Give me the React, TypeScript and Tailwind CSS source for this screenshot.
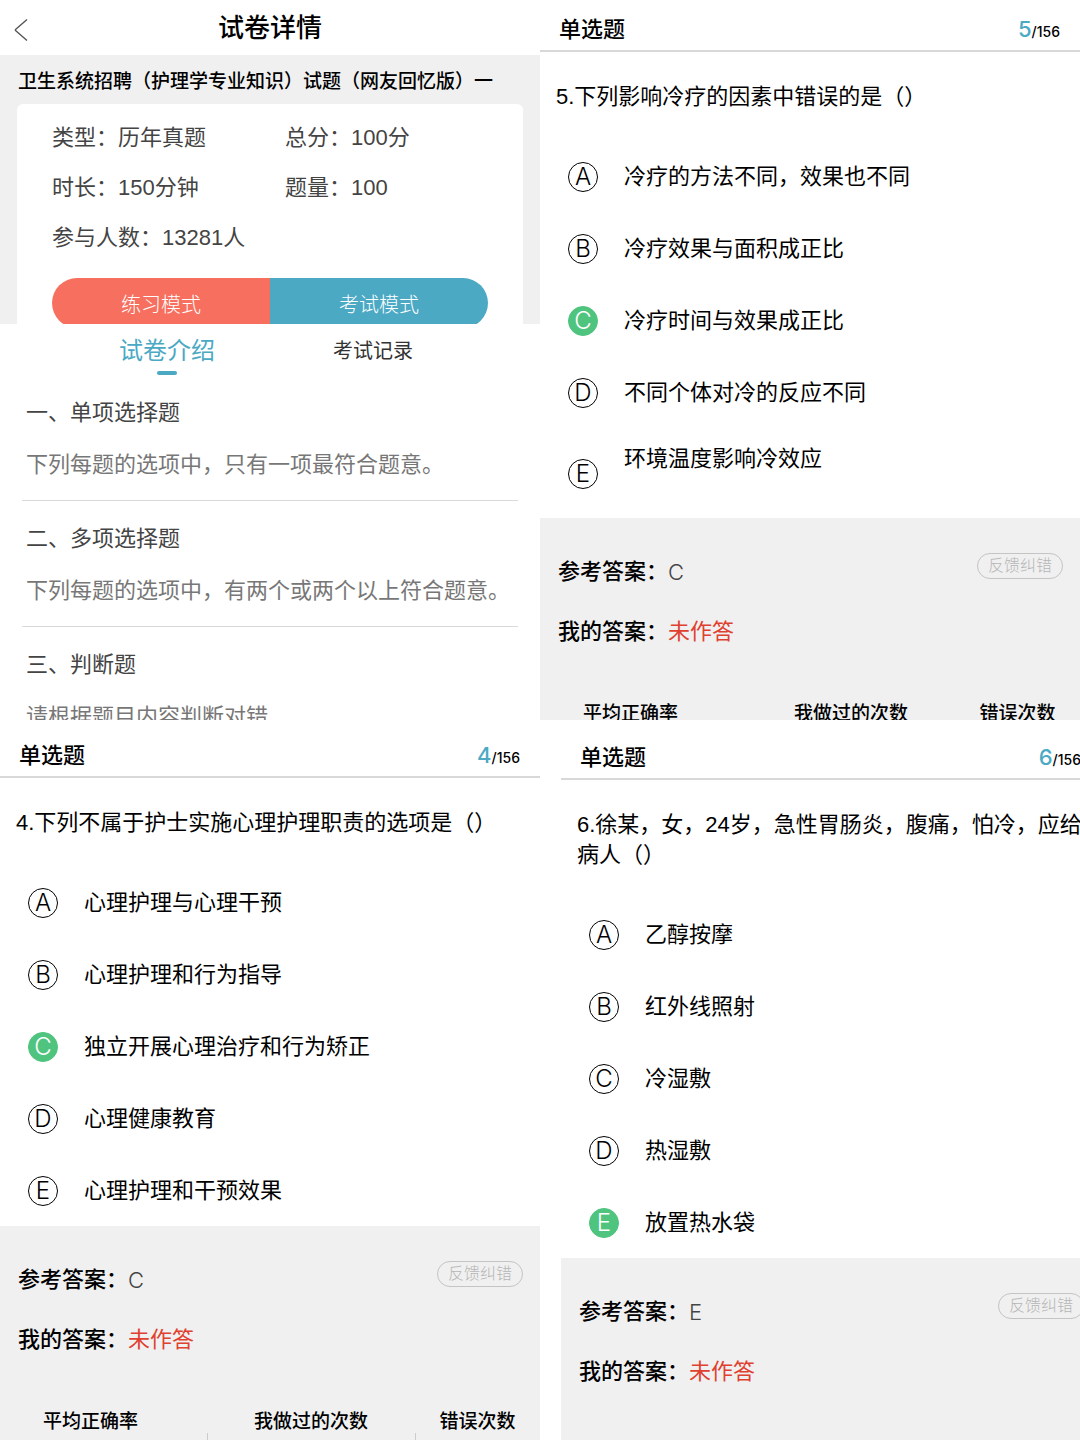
import type { ReactNode } from 'react';

type Option = { key: string; text: string; tall?: boolean };

type Question = {
    no: number;
    title: string;
    options: Option[];
    answer: string;
};

const TOTAL = 156;

const question4: Question = {
    no: 4,
    title: '下列不属于护士实施心理护理职责的选项是（）',
    options: [
        { key: 'A', text: '心理护理与心理干预' },
        { key: 'B', text: '心理护理和行为指导' },
        { key: 'C', text: '独立开展心理治疗和行为矫正' },
        { key: 'D', text: '心理健康教育' },
        { key: 'E', text: '心理护理和干预效果' },
    ],
    answer: 'C',
};

const question5: Question = {
    no: 5,
    title: '下列影响冷疗的因素中错误的是（）',
    options: [
        { key: 'A', text: '冷疗的方法不同，效果也不同' },
        { key: 'B', text: '冷疗效果与面积成正比' },
        { key: 'C', text: '冷疗时间与效果成正比' },
        { key: 'D', text: '不同个体对冷的反应不同' },
        { key: 'E', text: '环境温度影响冷效应', tall: true },
    ],
    answer: 'C',
};

const question6: Question = {
    no: 6,
    title: '徐某，女，24岁，急性胃肠炎，腹痛，怕冷，应给病人（）',
    options: [
        { key: 'A', text: '乙醇按摩' },
        { key: 'B', text: '红外线照射' },
        { key: 'C', text: '冷湿敷' },
        { key: 'D', text: '热湿敷' },
        { key: 'E', text: '放置热水袋' },
    ],
    answer: 'E',
};

const sections = [
    { title: '一、单项选择题', text: '下列每题的选项中，只有一项最符合题意。' },
    { title: '二、多项选择题', text: '下列每题的选项中，有两个或两个以上符合题意。' },
    { title: '三、判断题', text: '请根据题目内容判断对错' },
];

function PaperDetail() {
    return (
        <section className="min-w-0 overflow-hidden">
            <div className="h-[324px] overflow-hidden bg-[#f0f0f0]">
                <header className="grid h-[55px] grid-cols-[40px_1fr_40px] items-center bg-white">
                    <button type="button" aria-label="返回" className="pt-1 pl-3.5">
                        <svg width="14" height="24" viewBox="0 0 14 24" fill="none" stroke="#555" strokeWidth="1.4">
                            <path d="M13 1.5 1.8 11.2q-.9.8 0 1.6L13 22.5" />
                        </svg>
                    </button>
                    <h1 className="text-center text-[26px] leading-[54px] font-medium">试卷详情</h1>
                </header>
                <h2 className="px-[18px] pt-3 text-[19px] leading-[30px] font-medium whitespace-nowrap">
                    卫生系统招聘（护理学专业知识）试题（网友回忆版）一
                </h2>
                <div className="mx-[17px] mt-[7px] rounded-md bg-white px-[35px] pt-[9px] text-[#444]">
                    <dl className="grid grid-cols-[233px_1fr] text-[22px] leading-[50px]">
                        <Info label="类型">历年真题</Info>
                        <Info label="总分">100分</Info>
                        <Info label="时长">150分钟</Info>
                        <Info label="题量">100</Info>
                        <Info label="参与人数">13281人</Info>
                    </dl>
                    <div className="mt-[15px] flex overflow-hidden rounded-full text-[20px] leading-[46px] font-light text-white">
                        <button type="button" className="flex-1 bg-[#f76f5e] pt-1">练习模式</button>
                        <button type="button" className="flex-1 bg-[#4ba9c4] pt-1">考试模式</button>
                    </div>
                </div>
            </div>

            <nav className="flex h-[51px] items-start px-16">
                <button type="button" className="flex flex-1 flex-col items-center pt-3 text-[24px] leading-[30px] text-[#4ba9c4]">
                    试卷介绍
                    <span className="mt-[5px] h-1 w-5 rounded-full bg-[#4ba9c4]" />
                </button>
                <button type="button" className="flex-1 pt-3 text-[20px] leading-[30px] text-[#333]">
                    考试记录
                </button>
            </nav>

            <div className="px-[22px]">
                {sections.map((s) => (
                    <div key={s.title} className="border-b border-[#d9d9d9] px-1 pt-[23px] pb-5 text-[22px] leading-[30px] whitespace-nowrap">
                        <h3 className="text-[#444]">{s.title}</h3>
                        <p className="mt-[22px] text-[#777]">{s.text}</p>
                    </div>
                ))}
            </div>
        </section>
    );
}

function Info({ label, children }: { label: string; children: ReactNode }) {
    return (
        <div className="flex">
            <dt>{label}：</dt>
            <dd>{children}</dd>
        </div>
    );
}

function QuestionPanel({ question }: { question: Question }) {
    const { no, title, options, answer } = question;

    return (
        <article className="flex h-full w-full flex-col">
            <header className="flex h-[52px] shrink-0 items-baseline justify-between border-b-2 border-[#d8d8d8] pt-3.5 pr-5 pl-[19px]">
                <h2 className="text-[22px] leading-[30px] font-medium">单选题</h2>
                <p className="font-['Inter',sans-serif] text-[14px] leading-[30px] font-medium">
                    <span className="text-[22px] text-[#4ba9c4]">{no}</span>
                    {`/${TOTAL}`}
                </p>
            </header>

            <fieldset>
                <legend className="px-4 pt-[30px] pb-7 text-[22px] leading-[30px]">{`${no}.${title}`}</legend>
                {options.map((o) => (
                    <label key={o.key} className="flex min-h-[72px] items-center gap-[26px] pt-4 pb-3.5 pl-7 text-[22px] leading-[30px]">
                        <span className="grid shrink-0 place-items-center">
                            <input
                                type="radio"
                                name={`question-${no}`}
                                defaultChecked={o.key === answer}
                                className="peer col-start-1 row-start-1 size-[30px] appearance-none rounded-full border border-black checked:border-[#4fc47f] checked:bg-[#4fc47f]"
                            />
                            <span className="pointer-events-none col-start-1 row-start-1 font-['Inter',sans-serif] text-[24px] font-light peer-checked:text-white">
                                {o.key}
                            </span>
                        </span>
                        <span className={o.tall ? 'min-h-[60px]' : undefined}>{o.text}</span>
                    </label>
                ))}
            </fieldset>

            <div className="flex-1 bg-[#f0f0f0] pt-[35px]">
                <div className="flex items-start justify-between pr-[17px] pl-[18px]">
                    <dl className="space-y-[30px] pt-1 text-[22px] leading-[30px]">
                        <div className="flex">
                            <dt className="font-medium">参考答案：</dt>
                            <dd className="font-['Inter',sans-serif] font-light text-[#444]">{answer}</dd>
                        </div>
                        <div className="flex">
                            <dt className="font-medium">我的答案：</dt>
                            <dd className="text-[#e0402f]">未作答</dd>
                        </div>
                    </dl>
                    <button type="button" className="rounded-full border border-[#c4c4c4] px-2.5 text-[16px] leading-[24px] font-light text-[#b5b5b5]">
                        反馈纠错
                    </button>
                </div>
                <table className="mt-14 w-full table-fixed text-[19px] leading-[22px]">
                    <thead>
                        <tr>
                            <th className="w-[207px] pr-[26px] font-medium">平均正确率</th>
                            <th className="w-[208px] font-medium">我做过的次数</th>
                            <th className="font-medium">错误次数</th>
                        </tr>
                    </thead>
                    <tbody>
                        <tr className="h-10">
                            <td className="border-r border-[#ccc]" />
                            <td className="border-r border-[#ccc]" />
                            <td />
                        </tr>
                    </tbody>
                </table>
            </div>
        </article>
    );
}

export default function App() {
    return (
        <main className="grid h-screen grid-cols-2 grid-rows-2 overflow-hidden bg-white font-['Liberation_Sans','Noto_Sans_CJK_SC',sans-serif] text-black">
            <PaperDetail />
            <div className="min-w-0 overflow-hidden">
                <QuestionPanel question={question5} />
            </div>
            <div className="min-w-0 overflow-hidden pt-1.5">
                <QuestionPanel question={question4} />
            </div>
            <div className="min-w-0 overflow-hidden pt-2">
                {/* runs past the right edge of its cell */}
                <div className="ml-[21px] h-full w-full">
                    <QuestionPanel question={question6} />
                </div>
            </div>
        </main>
    );
}
